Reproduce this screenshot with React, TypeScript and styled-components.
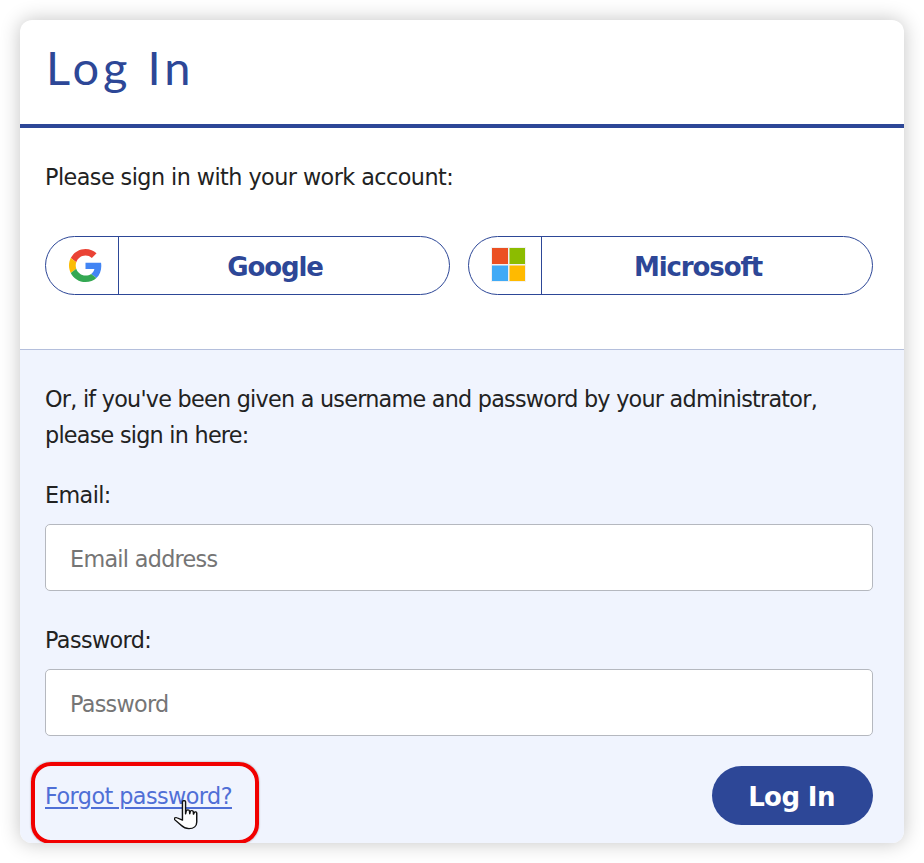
import React from "react";
import styled, { createGlobalStyle } from "styled-components";

const Global = createGlobalStyle`
  html, body { margin: 0; padding: 0; background: #fff; }
  body { font-family: "DejaVu Sans", "Noto Sans", sans-serif; }
  * { box-sizing: border-box; }
`;

const Page = styled.div`
  width: 924px;
  height: 863px;
  padding: 20px;
  overflow: hidden;
`;

const Card = styled.main`
  width: 884px;
  height: 823px;
  background: #fff;
  border-radius: 12px;
  box-shadow: 0 0 20px rgba(0, 0, 0, 0.24);
  display: flex;
  flex-direction: column;
  overflow: hidden;
`;

const Header = styled.header`
  height: 108px;
  flex: none;
  border-bottom: 4px solid #2d4797;
  padding: 14px 0 0 26px;
`;

const Title = styled.h1`
  margin: 0;
  font-family: "Lato", sans-serif;
  font-weight: 400;
  font-size: 47px;
  line-height: 66px;
  letter-spacing: 4px;
  color: #2d4797;
`;

const SsoSection = styled.section`
  height: 222px;
  flex: none;
  padding: 31px 31px 0 25px;
  border-bottom: 1px solid #b4bfdc;
`;

const Text = styled.p<{ $spacing: number }>`
  margin: 0;
  font-size: 22.3px;
  line-height: 36px;
  letter-spacing: ${(p) => p.$spacing}px;
  color: #222;
`;

const SsoRow = styled.div`
  display: flex;
  gap: 18px;
  margin-top: 41px;
`;

const SsoButton = styled.button`
  flex: none;
  width: 405px;
  height: 59px;
  padding: 0;
  display: flex;
  align-items: stretch;
  background: #fff;
  border: 1px solid #2d4797;
  border-radius: 30px;
  font-family: inherit;
`;

const SsoIcon = styled.span`
  flex: none;
  width: 73px;
  border-right: 1px solid #2d4797;
  display: flex;
  align-items: center;
  justify-content: center;
  padding-left: 7px;
`;

const SsoLabel = styled.span`
  flex: 1;
  display: flex;
  align-items: center;
  justify-content: center;
  padding: 2px 18px 0 0;
  font-size: 26px;
  font-weight: 700;
  letter-spacing: -1.1px;
  color: #2d4797;
`;

const FormSection = styled.form`
  flex: 1;
  background: #f0f4fe;
  padding: 31px 31px 0 25px;
`;

const Label = styled.label<{ $top: number }>`
  display: block;
  margin-top: ${(p) => p.$top}px;
  font-size: 22.3px;
  line-height: 36px;
  letter-spacing: -0.6px;
  color: #222;
`;

const Input = styled.input`
  display: block;
  width: 828px;
  height: 67px;
  margin-top: 11px;
  padding: 2px 24px 0;
  background: #fff;
  border: 1px solid #b5b8bf;
  border-radius: 5px;
  font-family: inherit;
  font-size: 22.3px;
  letter-spacing: -0.7px;
  outline: none;
  &::placeholder { color: #757575; opacity: 1; }
`;

const Footer = styled.div`
  position: relative;
  display: flex;
  align-items: center;
  justify-content: space-between;
  margin-top: 30px;
  height: 59px;
`;

const ForgotLink = styled.a`
  font-size: 22.3px;
  letter-spacing: -0.55px;
  color: #4f6fd6;
  text-decoration: underline;
  text-underline-offset: 3px;
  text-decoration-thickness: 1.5px;
`;

const Submit = styled.button`
  width: 161px;
  height: 59px;
  padding: 2px 2px 0 0;
  border: none;
  border-radius: 30px;
  background: #2d4797;
  color: #fff;
  font-family: inherit;
  font-size: 26px;
  font-weight: 700;
  letter-spacing: -0.6px;
`;

const Highlight = styled.div`
  position: absolute;
  left: -14px;
  top: -4px;
  width: 228px;
  height: 82px;
  border: 4px solid #f10000;
  border-radius: 20px;
  box-shadow: 0 0 2px rgba(0, 0, 0, 0.4);
  pointer-events: none;
`;

const Cursor = styled.svg`
  position: absolute;
  left: 129px;
  top: 34px;
  pointer-events: none;
`;

const MicrosoftWrap = styled.span`
  display: flex;
  margin-bottom: 2px;
`;

const GoogleLogo = () => (
  <svg width="33" height="33" viewBox="0 0 48 48">
    <path fill="#EA4335" d="M24 9.5c3.54 0 6.71 1.22 9.21 3.6l6.85-6.85C35.9 2.38 30.47 0 24 0 14.62 0 6.51 5.38 2.56 13.22l7.98 6.19C12.43 13.72 17.74 9.5 24 9.5z" />
    <path fill="#4285F4" d="M46.98 24.55c0-1.57-.15-3.09-.38-4.55H24v9.02h12.94c-.58 2.96-2.26 5.48-4.78 7.18l7.73 6c4.51-4.18 7.09-10.36 7.09-17.65z" />
    <path fill="#FBBC05" d="M10.53 28.59c-.48-1.45-.76-2.99-.76-4.59s.27-3.14.76-4.59l-7.98-6.19C.92 16.46 0 20.12 0 24c0 3.88.92 7.54 2.56 10.78l7.97-6.19z" />
    <path fill="#34A853" d="M24 48c6.48 0 11.93-2.13 15.89-5.81l-7.73-6c-2.15 1.45-4.92 2.3-8.16 2.3-6.26 0-11.57-4.22-13.47-9.91l-7.98 6.19C6.51 42.62 14.62 48 24 48z" />
  </svg>
);

const MicrosoftLogo = () => (
  <MicrosoftWrap>
    <svg width="35" height="35" viewBox="0 0 35 35">
      <rect width="35" height="35" fill="#f1f1f1" />
      <rect x="1" y="1" width="16" height="16" fill="#eb5022" />
      <rect x="18.5" y="1" width="15.5" height="16" fill="#8cbc00" />
      <rect x="1" y="18.5" width="16" height="15.5" fill="#40aaf6" />
      <rect x="18.5" y="18.5" width="15.5" height="15.5" fill="#ffba00" />
    </svg>
  </MicrosoftWrap>
);

export default function App() {
  return (
    <Page>
      <Global />
      <Card>
        <Header>
          <Title>Log In</Title>
        </Header>
        <SsoSection>
          <Text $spacing={-0.55}>Please sign in with your work account:</Text>
          <SsoRow>
            <SsoButton type="button">
              <SsoIcon><GoogleLogo /></SsoIcon>
              <SsoLabel>Google</SsoLabel>
            </SsoButton>
            <SsoButton type="button">
              <SsoIcon><MicrosoftLogo /></SsoIcon>
              <SsoLabel>Microsoft</SsoLabel>
            </SsoButton>
          </SsoRow>
        </SsoSection>
        <FormSection>
          <Text $spacing={-0.75}>
            Or, if you've been given a username and password by your administrator,
            <br />
            please sign in here:
          </Text>
          <Label $top={24} htmlFor="email">Email:</Label>
          <Input id="email" placeholder="Email address" />
          <Label $top={31} htmlFor="password">Password:</Label>
          <Input id="password" placeholder="Password" />
          <Footer>
            <ForgotLink href="#">Forgot password?</ForgotLink>
            <Submit type="button">Log In</Submit>
            <Highlight />
            <Cursor width="26" height="33" viewBox="1.5 1.5 20 29.5" preserveAspectRatio="none">
              <path
                d="M8 3c0-1.3 2.4-1.3 2.4 0v11l.6-3c.5-1 2.2-1 2.4.2l.2 2.6.5-2.3c.5-.9 2-.8 2.2.3l.2 2.4.6-1.6c.5-.8 1.8-.6 1.9.5v8c0 3.5-2.3 6-6 6-3 0-4.4-1.2-6-3l-5-5c-.9-1.1.4-2.4 1.7-1.7L8 19.5z"
                fill="#fff"
                stroke="#111"
                strokeWidth="1.1"
                strokeLinejoin="round"
              />
            </Cursor>
          </Footer>
        </FormSection>
      </Card>
    </Page>
  );
}
